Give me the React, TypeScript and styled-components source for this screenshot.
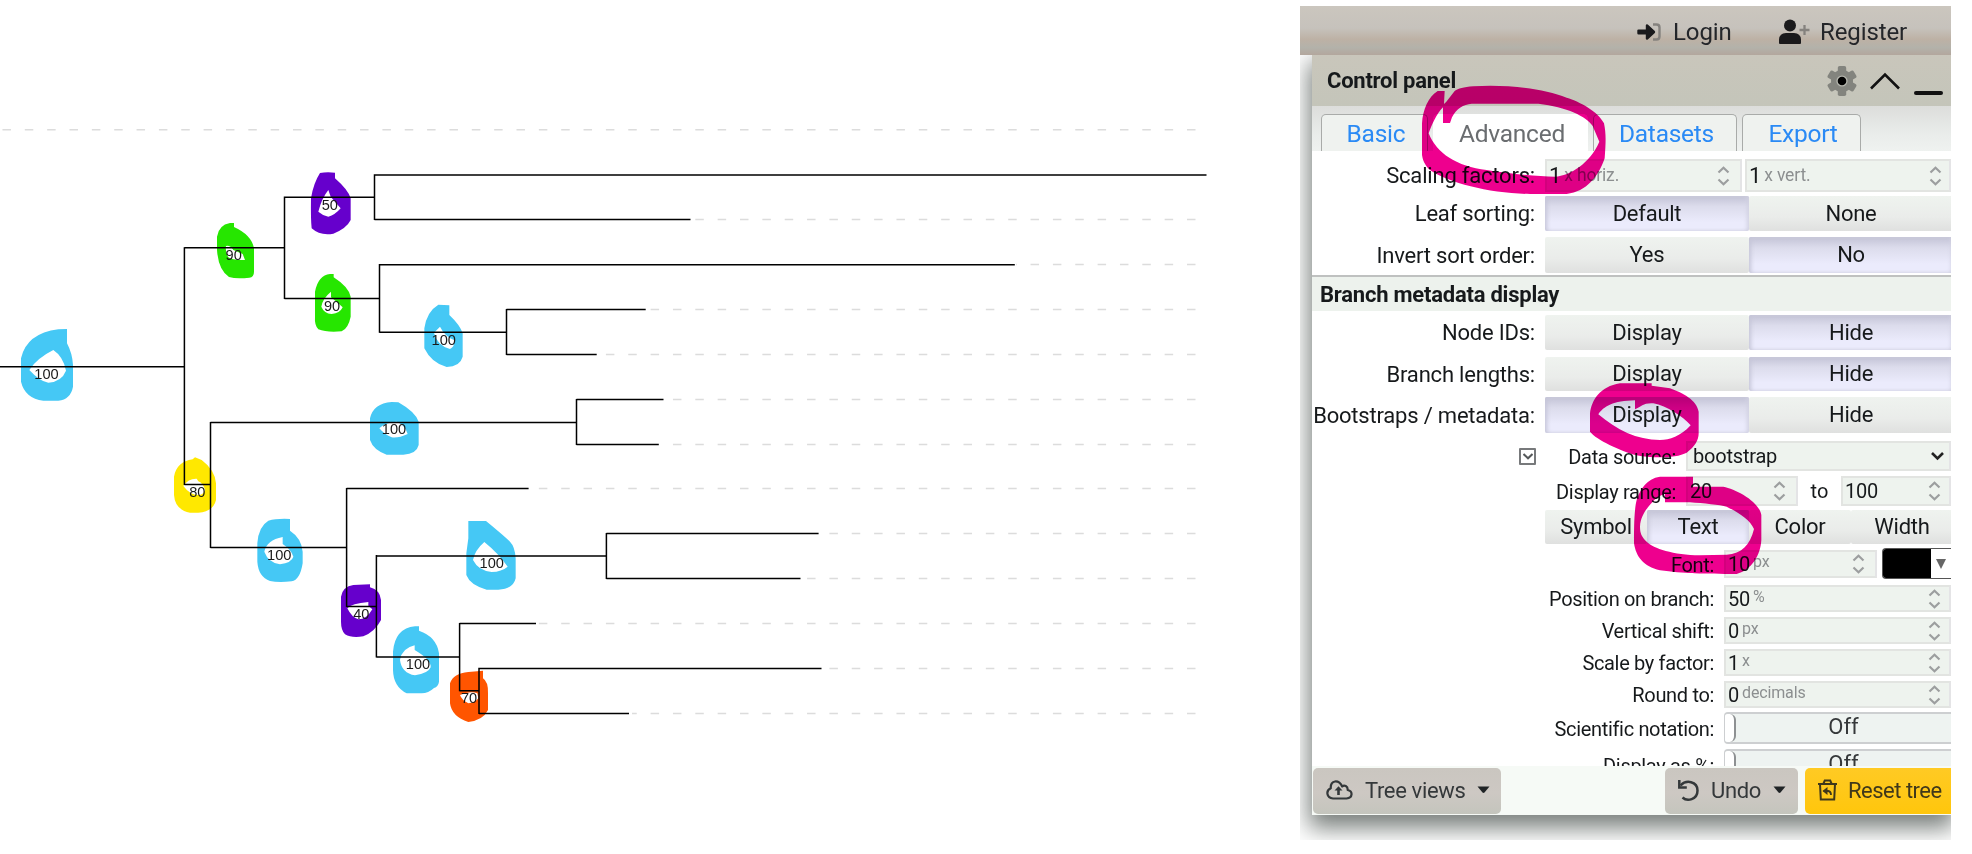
import React from "react";
import styled, { createGlobalStyle, css } from "styled-components";

const Global = createGlobalStyle`
  * { box-sizing: border-box; }
  html, body { margin: 0; padding: 0; background: #fff; }
  body { overflow: hidden; font-family: Roboto, "Liberation Sans", sans-serif; color: #16191b; }
`;

/* ---------- page ---------- */

const Page = styled.main`
  position: relative;
  display: flex;
  width: 1972px;
  height: 854px;
  overflow: hidden;
`;

const TreeView = styled.svg`
  flex: 0 0 1300px;
  height: 854px;
  display: block;
`;

const TreeLabel = styled.text`
  font: 14.6px "Liberation Sans", sans-serif;
  fill: #1a1a1a;
  text-anchor: middle;
`;

const Side = styled.aside`
  width: 651px;
  height: 834px;
  margin-top: 6px;
  overflow: hidden;
  display: flex;
  flex-direction: column;
`;

const TopBar = styled.header`
  flex: 0 0 49px;
  display: flex;
  align-items: center;
  justify-content: flex-end;
  padding: 2px 44px 0 0;
  gap: 48px;
  background: linear-gradient(#cbc6be 0%, #c6c2bc 45%, #bdb1a5 68%, #b3b2aa 85%, #b3a79d 100%);
  position: relative;
  z-index: 1;
`;

const TopLink = styled.a<{ $w: number; $gap: number }>`
  display: flex;
  align-items: center;
  gap: ${(p) => p.$gap}px;
  font-size: 24px;
  letter-spacing: -0.1px;
  color: #24262a;
  span { width: ${(p) => p.$w}px; white-space: nowrap; }
`;

const Panel = styled.section`
  margin-left: 12px;
  height: 760px;
  display: flex;
  flex-direction: column;
  background: #fff;
  box-shadow: 0 10px 22px 3px rgba(30, 40, 35, 0.6);
`;

const PanelHead = styled.div`
  flex: 0 0 51px;
  display: flex;
  align-items: center;
  justify-content: space-between;
  padding: 0 7px 0 15px;
  background: linear-gradient(#c9c6bb, #c4c5ba);
`;

const PanelTitle = styled.h2`
  margin: 0;
  font-size: 22px;
  font-weight: 700;
  letter-spacing: -0.25px;
`;

const HeadTools = styled.div`
  display: flex;
  align-items: center;
  gap: 11.5px;
`;

const Tabs = styled.nav`
  flex: 0 0 45px;
  display: flex;
  align-items: flex-end;
  gap: 5px;
  padding-left: 9px;
  background: linear-gradient(#dcdddb, #e9ecea 60%, #eff2f0);
`;

const Tab = styled.button<{ $w: number; $active?: boolean }>`
  width: ${(p) => p.$w}px;
  height: 37px;
  padding: 0 0 0 3px;
  font: 24.5px Roboto, sans-serif;
  letter-spacing: -0.25px;
  color: ${(p) => (p.$active ? "#6a6d70" : "#2a8af5")};
  background: ${(p) => (p.$active ? "#fff" : "#eff2ef")};
  border: 1px solid #a9aba9;
  border-bottom: 0;
  border-radius: 5px 5px 0 0;
  ${(p) => p.$active && css`border-color: #fff;`}
`;

const Body = styled.div`
  flex: 0 0 615px;
  overflow: hidden;
  display: flex;
  flex-direction: column;
`;

const Row = styled.div<{ $mt: number; $h: number }>`
  flex: 0 0 ${(p) => p.$h}px;
  height: ${(p) => p.$h}px;
  min-height: 0;
  margin-top: ${(p) => p.$mt}px;
  display: flex;
  align-items: stretch;
`;

const Label = styled.label<{ $w: number; $small?: boolean }>`
  flex: 0 0 ${(p) => p.$w}px;
  display: flex;
  align-items: center;
  justify-content: flex-end;
  padding: 1px 10px 0 0;
  white-space: nowrap;
  line-height: 1;
  font-size: ${(p) => (p.$small ? 20 : 22)}px;
  letter-spacing: ${(p) => (p.$small ? -0.33 : -0.2)}px;
`;

const SectionTitle = styled.h3`
  flex: 0 0 36px;
  margin: 2px 0 0;
  padding: 1px 0 0 8px;
  display: flex;
  align-items: center;
  font-size: 22px;
  font-weight: 700;
  letter-spacing: -0.23px;
  background: #edf2ed;
  border-top: 2px solid #bfc1c0;
`;

const Choice = styled.button<{ $on?: boolean; $w?: number }>`
  flex: 0 0 ${(p) => p.$w ?? 204}px;
  border: 0;
  border-radius: 2px;
  padding: 0 0 1px;
  font: 22px Roboto, sans-serif;
  letter-spacing: -0.25px;
  color: #16191b;
  background: linear-gradient(#eff3ef, #eaecea 60%, #dfe0df);
  ${(p) =>
    p.$on &&
    css`
      background: linear-gradient(#c3c3d6, #dcdcec 30%, #ebebfc 75%);
      box-shadow: inset 3px 0 4px -1px #c6c6d8, inset -3px 0 4px -1px #d2d2e2;
    `}
`;

const Field = styled.div<{ $w: number; $ml?: number; $small?: boolean; $inset?: number; $pl?: number }>`
  flex: 0 0 ${(p) => p.$w}px;
  margin-left: ${(p) => p.$ml ?? 0}px;
  display: flex;
  align-items: center;
  gap: 3px;
  padding: 0 ${(p) => p.$inset ?? 10}px 0 ${(p) => p.$pl ?? 2}px;
  line-height: 1;
  font-size: ${(p) => (p.$small ? 20 : 22)}px;
  letter-spacing: -0.2px;
  background: #eef3ee;
  border: 2px solid #e2e4e1;
  border-right-color: #e4e4e6;
  svg { margin-left: auto; }
`;

const Unit = styled.span<{ $raised?: boolean }>`
  font-size: ${(p) => (p.$raised ? 16 : 17.5)}px;
  letter-spacing: -0.15px;
  color: #8c8f90;
  ${(p) => p.$raised && css`padding-bottom: 4px;`}
`;

const Between = styled.span`
  flex: 0 0 43px;
  display: flex;
  align-items: center;
  justify-content: center;
  font-size: 20px;
`;

const Swatch = styled.div`
  flex: 1;
  margin: -2px 0 -1px 5px;
  display: flex;
  border: 1px solid #555;
  border-right: 0;
  border-radius: 4px 0 0 4px;
  background: #fff;
  overflow: hidden;
`;

const SwatchColor = styled.i`
  width: 48px;
  background: #000;
`;

const SwatchArrow = styled.span`
  flex: 1;
  display: flex;
  align-items: center;
  justify-content: center;
`;

const Toggle = styled.div`
  flex: 1;
  display: flex;
  background: #eef3f1;
  border: solid #cdcfd1;
  border-width: 2px 0 2px 1px;
  border-radius: 4px 0 0 4px;
`;

const Knob = styled.i`
  width: 11px;
  background: #fff;
  border-right: 2px solid #8d9092;
  border-radius: 3px 6px 6px 3px;
`;

const ToggleText = styled.span`
  flex: 1;
  text-align: center;
  font-size: 22px;
  line-height: 26px;
  color: #35383a;
`;

const Footer = styled.footer`
  flex: 0 0 49px;
  display: flex;
  align-items: center;
  padding: 2px 0 1px 1px;
  background: #f6faf6;
`;

const FootButton = styled.button<{ $w: number; $gap: number; $primary?: boolean }>`
  width: ${(p) => p.$w}px;
  height: 46px;
  display: flex;
  align-items: center;
  gap: ${(p) => p.$gap}px;
  padding: 0 0 2px 13px;
  border: 0;
  border-radius: 5px;
  font: 22px Roboto, sans-serif;
  letter-spacing: -0.35px;
  white-space: nowrap;
  color: #34383a;
  background: linear-gradient(#cac6c0, #cdc8c3 55%, #c4c5bd);
  ${(p) =>
    p.$primary &&
    css`
      border-radius: 5px 0 0 5px;
      letter-spacing: -0.5px;
      color: #40381a;
      background: linear-gradient(#ffca24, #ffc60c);
    `}
`;

const Spacer = styled.span<{ $w: number }>`
  flex: 0 0 ${(p) => p.$w}px;
`;

const CheckBox = styled.span`
  flex: 0 0 17px;
  align-self: center;
  height: 17px;
  margin-left: 207px;
  border: 2px solid #77797b;
  border-radius: 1px;
  display: flex;
  align-items: center;
  justify-content: center;
`;

const Marker = styled.svg`
  position: absolute;
  inset: 0;
  pointer-events: none;
  mix-blend-mode: multiply;
`;

/* ---------- icons ---------- */

const Spin = () => (
  <svg width="13" height="20" viewBox="0 0 13 20" fill="none" stroke="#9c9e9f" strokeWidth="2.2">
    <path d="M1.5 6.5 6.5 1.8l5 4.7M1.5 13.5l5 4.7 5-4.7" />
  </svg>
);

const Caret = () => (
  <svg width="13" height="8" viewBox="0 0 12 8">
    <path d="M0 .5h12L7 6.6q-1 .9-2 0z" fill="#202426" />
  </svg>
);

const LoginIcon = () => (
  <svg width="25" height="20" viewBox="0 0 25 20">
    <path d="M16 2.5h3.5q3 0 3 3v9q0 3-3 3H16" fill="none" stroke="#85827e" strokeWidth="2.4" />
    <path d="M1.5 7.4h7.3V3.2q.6-1.7 2-.6l7 6.4q.9 1 0 2l-7 6.4q-1.4 1-2-.6v-4.2H1.5Q.3 12.4.3 11.2V8.6q0-1.2 1.2-1.2z" fill="#1a1a1c" />
  </svg>
);

const RegisterIcon = () => (
  <svg width="31" height="25" viewBox="0 0 31 25">
    <circle cx="11" cy="6.4" r="6" fill="#1a1a1c" />
    <path d="M0 24v-3.5q.5-6.500 7-6.500h8q6.500 0 7 6.500V24q0 1-1 1H1q-1 0-1-1z" fill="#1a1a1c" />
    <path d="M25.5 6v10M20.5 11h10" stroke="#85827e" strokeWidth="2.3" />
  </svg>
);

const GearIcon = () => (
  <svg width="30" height="32" viewBox="-15 -16 30 32">
    <g fill="#83847e">
      <circle r="11" />
      {[0, 60, 120].map((a) => (
        <rect key={a} x="-4.2" y="-15" width="8.4" height="30" rx="1.8" transform={`rotate(${a})`} />
      ))}
    </g>
    <circle r="5.6" fill="#b5b6ae" />
    <circle r="4.3" fill="#000" />
  </svg>
);

const CloudIcon = () => (
  <svg width="27" height="20" viewBox="0 0 27 20" fill="none" stroke="#34383a" strokeWidth="2.2">
    <path d="M7 18.5h13.500c6.500-.5 6.500-7.500 1.200-8.500.2-4-3.500-5.300-5.500-3.500C13-.5 4-.5 4.800 8.300-.5 10.500.5 18 7 18.500z" strokeLinejoin="round" />
    <path d="M12.500 15V8" strokeWidth="2.600" />
    <path d="M8.500 10.500 12.500 6.300l4 4.200z" fill="#34383a" stroke="none" />
  </svg>
);

const UndoIcon = () => (
  <svg width="21" height="21" viewBox="0 0 21 21" fill="none" stroke="#34383a" strokeWidth="2.5">
    <path d="M2.500 5.500C8-.5 19.500 1 19.500 10.500S9 21.500 4.500 17.500" />
    <path d="M1.300 0v7.500h7.500" />
  </svg>
);

const TrashIcon = () => (
  <svg width="19" height="22" viewBox="0 0 19 22" fill="none" stroke="#40381a" strokeWidth="2">
    <path d="M0 5h19M5.500 4.500l1.300-3h5.400l1.300 3M2 5l.8 15.500h13.400L17 5" />
    <path d="M5.500 12h4.800q2.700.3 2.700 4" strokeWidth="1.800" />
    <path d="M9.500 8v8L4.500 12z" fill="#40381a" stroke="none" />
  </svg>
);

/* ---------- tree data ---------- */

const leaders: [number, number][] = [
  [0, 129.8], [690, 219.6], [1016, 264.6], [648, 309.5], [599, 354.5], [668, 399.5], [662, 444.5],
  [532, 488.6], [822, 533.5], [803, 578.5], [538, 623.5], [825, 668.5], [632, 713.5],
];

const branches = [
  "M0 366.8H184.4M184.4 247.2V484.9",
  "M184.4 247.8H284.5M284.5 196.5V299",
  "M284.5 197.2H374.5M374.5 174.2V220.1M374.5 174.9H1206.5M374.5 219.6H690.5",
  "M284.5 298.5H379.5M379.5 264.1V332.7M379.5 264.7H1014.8",
  "M379.5 332.2H506.5M506.5 309V355.1M506.5 309.6H645.7M506.5 354.6H596.7",
  "M184.4 484.4H210.5M210.5 421.9V547.9",
  "M210.5 422.4H576.5M576.5 398.9V445.1M576.5 399.5H663.5M576.5 444.5H658.8",
  "M210.5 547.4H346.6M346.6 488V606.9M346.6 488.5H528.6",
  "M346.6 606.4H376.4M376.4 555V657.6",
  "M376.4 555.9H606.4M606.4 533V579M606.4 533.6H818.6M606.4 578.5H800.5",
  "M376.4 657.1H459.6M459.6 623V691.2M459.6 623.5H536",
  "M459.6 690.7H479M479 667.8V714M479 668.4H821.5M479 713.5H629",
];

const labels: [number, number, string][] = [
  [46.5, 379, "100"], [329.8, 210.3, "50"], [233.7, 260, "90"], [332, 311, "90"],
  [443.7, 345.3, "100"], [394, 434.3, "100"], [197.3, 497, "80"], [279.3, 560, "100"],
  [491.7, 568.3, "100"], [361.3, 619, "40"], [418, 669.3, "100"], [469, 703.3, "70"],
];

const SKY = "#45c8f5";
const GREEN = "#26e600";
const VIOLET = "#6600cc";

/* Highlighter blobs grouped by local origin, drawn at triple resolution. */
const blobs: { at: [number, number]; color: string; d: string }[] = [
  { at: [0, 120], color: SKY, d: "M201 627V670Q217 700 219 735V800Q212 838 175 842H130Q75 835 63 785V715Q80 640 175 628ZM160 690Q110 715 88 750Q120 785 145 788Q185 785 198 752Q190 710 160 690Z" },
  { at: [0, 120], color: GREEN, d: "M702 309V321Q755 345 762 385V455Q762 472 748 473Q710 478 687 471Q655 450 651 390V350Q656 315 690 309ZM678 378Q675 395 685 412Q700 422 735 420L728 402 700 390Q690 375 678 378Z" },
  { at: [0, 120], color: VIOLET, d: "M1005 158V175Q1045 210 1052 235V300Q1040 325 1000 341Q960 348 935 325Q932 300 933 235Q940 190 960 159Q980 155 1005 158ZM985 210Q965 235 955 275Q970 288 985 290Q1005 285 1022 265Q1005 245 992 230Z" },
  { at: [0, 120], color: GREEN, d: "M1001 462V472Q1045 500 1052 530V590Q1045 625 1025 634Q980 638 955 628Q943 615 945 590V515Q955 465 990 462ZM993 515Q968 535 964 560Q972 580 995 582Q1020 580 1028 562Q1010 545 993 532Z" },
  { at: [270, 160], color: SKY, d: "M538 436V465Q570 495 578 520V590Q570 620 530 621Q485 610 463 565V505Q470 455 505 434ZM510 500 L492 518Q500 555 540 567Q555 560 552 540Q525 530 510 500Z" },
  { at: [270, 160], color: SKY, d: "M385 727Q435 755 446 785V855Q440 882 400 884H350Q310 870 300 840V775Q310 730 365 726ZM328 805Q350 785 380 785Q405 795 413 822Q385 835 365 832Q345 825 328 805Z" },
  { at: [160, 380], color: "#ffe800", d: "M105 232L125 240Q165 270 168 310V360Q160 395 115 398H90Q45 390 42 345V290Q50 245 98 238ZM70 318Q85 295 110 296L115 304Q130 310 135 330Q130 345 115 345Q90 345 70 318Z" },
  { at: [160, 380], color: SKY, d: "M390 417V452Q425 475 428 515V550Q420 600 395 604Q355 608 330 603Q295 590 292 545V490Q295 440 325 422Q350 415 390 417ZM368 471V492Q395 510 400 530Q395 548 360 553Q325 548 313 515Q320 480 368 471Z" },
  { at: [160, 380], color: SKY, d: "M925 423H978Q1035 470 1050 485Q1065 500 1067 535V595Q1060 627 1015 629H980Q930 615 919 585V520L925 475ZM973 486Q945 510 939 540Q955 572 995 576Q1025 575 1043 560Q1015 520 973 486Z" },
  { at: [160, 380], color: VIOLET, d: "M630 613V622Q660 630 663 660V720Q645 755 610 769Q575 775 555 763Q543 750 543 725V650Q548 620 580 615ZM562 685Q575 670 625 666V677L637 688Q620 718 595 718Q575 712 562 685Z" },
  { at: [160, 380], color: SKY, d: "M777 739V752Q830 770 837 820V905Q835 920 822 924Q805 940 785 940H740Q700 920 699 870V815Q705 745 765 739ZM764 796Q725 805 720 840Q725 880 765 886Q805 880 812 862Q815 840 764 810Z" },
  { at: [160, 380], color: "#ff5500", d: "M969 872V895Q985 905 984 940V990Q970 1020 925 1026Q875 1010 870 970V910Q880 880 925 876ZM900 945Q905 960 925 970Q945 968 955 955L952 940Q930 932 900 945Z" },
];

const rings: { at: [number, number]; d: string }[] = [
  { at: [1290, 0], d: "M464 273H443C415 290 398 330 396 370V465C400 490 410 500 420 510C480 550 600 580 720 582H830C890 575 925 530 944 475C948 420 948 400 942 370C925 335 870 305 830 293C760 265 650 253 550 259C520 261 505 266 494 273L469 305L462 312ZM416 400C425 375 440 340 459 322V369H480L486 352C500 325 520 313 545 311H745C830 320 890 350 908 378L928 425C900 490 840 527 795 530C740 530 650 520 590 510C500 500 440 460 416 400Z" },
  { at: [1570, 370], d: "M245 40H150C90 50 65 90 60 130V185C80 210 150 242 200 256C250 266 320 264 350 248C375 230 386 210 386 190V125C380 90 340 70 300 55L245 47ZM85 133C100 110 130 92 195 91V118C215 110 220 98 250 100C290 108 340 140 362 166C330 200 300 210 270 210C200 210 140 180 85 133Z" },
  { at: [1570, 370], d: "M369 320H270C230 325 210 360 200 390C192 420 192 480 192 520C198 560 220 590 270 601C340 611 400 612 500 612C545 600 572 555 574 510V435C568 395 500 358 460 350H369ZM210 470C212 430 240 405 253 390Q270 375 285 372V397H360C400 400 450 405 470 410C510 430 540 450 552 477C540 525 515 552 470 554L390 556C310 555 250 535 230 515C215 500 210 490 210 470Z" },
];

/* ---------- panel pieces ---------- */

const ChoiceRow = ({ label, options, on, mt, h }: {
  label: string; options: [string, string]; on: 0 | 1; mt: number; h: number;
}) => (
  <Row $mt={mt} $h={h}>
    <Label $w={233}>{label}</Label>
    {options.map((o, i) => (
      <Choice key={o} $on={i === on}>{o}</Choice>
    ))}
  </Row>
);

const NumberRow = ({ label, value, unit, mt = 5 }: { label: string; value: string; unit: string; mt?: number }) => (
  <Row $mt={mt} $h={27}>
    <Label $w={412} $small>{label}</Label>
    <Field $w={227} $small $inset={8}>
      {value}
      <Unit $raised>{unit}</Unit>
      <Spin />
    </Field>
  </Row>
);

const ToggleRow = ({ label, mt }: { label: string; mt: number }) => (
  <Row $mt={mt} $h={32}>
    <Label $w={412} $small>{label}</Label>
    <Toggle>
      <Knob />
      <ToggleText>Off</ToggleText>
    </Toggle>
  </Row>
);

export default function App() {
  return (
    <>
      <Global />
      <Page>
        <TreeView viewBox="0 0 1300 854">
          <g stroke="#dcdcdc" strokeWidth="1.5" strokeDasharray="8.5 13.85">
            {leaders.map(([x, y]) => (
              <line key={y} x1="1195.5" y1={y} x2={x} y2={y} />
            ))}
          </g>
          {blobs.map((b, i) => (
            <path key={i} d={b.d} fill={b.color} fillRule="evenodd" transform={`translate(${b.at[0]} ${b.at[1]}) scale(${1 / 3})`} />
          ))}
          <path d={branches.join("")} fill="none" stroke="#000" strokeWidth="1.5" />
          {labels.map(([x, y, t]) => (
            <TreeLabel key={`${x}`} x={x} y={y}>{t}</TreeLabel>
          ))}
        </TreeView>

        <Side>
          <TopBar>
            <TopLink $w={58} $gap={11}><LoginIcon /><span>Login</span></TopLink>
            <TopLink $w={87} $gap={10}><RegisterIcon /><span>Register</span></TopLink>
          </TopBar>
          <Panel>
            <PanelHead>
              <PanelTitle>Control panel</PanelTitle>
              <HeadTools>
                <GearIcon />
                <svg width="32" height="20" viewBox="0 0 32 20" fill="none" stroke="#111" strokeWidth="2.6">
                  <path d="M2 17.5 16 3.500l14 14" />
                </svg>
                <svg width="32" height="30" viewBox="0 0 32 30" stroke="#111" strokeWidth="4" strokeLinecap="round">
                  <path d="M4 27h25" />
                </svg>
              </HeadTools>
            </PanelHead>
            <Tabs>
              <Tab $w={107}>Basic</Tab>
              <Tab $w={155} $active>Advanced</Tab>
              <Tab $w={144}>Datasets</Tab>
              <Tab $w={119}>Export</Tab>
            </Tabs>
            <Body>
              <Row $mt={8} $h={33}>
                <Label $w={233}>Scaling factors:</Label>
                <Field $w={197}>1<Unit>x horiz.</Unit><Spin /></Field>
                <Field $w={206} $ml={3} $inset={7}>1<Unit>x vert.</Unit><Spin /></Field>
              </Row>
              <ChoiceRow label="Leaf sorting:" options={["Default", "None"]} on={0} mt={4} h={35} />
              <ChoiceRow label="Invert sort order:" options={["Yes", "No"]} on={1} mt={6} h={36} />
              <SectionTitle>Branch metadata display</SectionTitle>
              <ChoiceRow label="Node IDs:" options={["Display", "Hide"]} on={1} mt={4} h={35} />
              <ChoiceRow label="Branch lengths:" options={["Display", "Hide"]} on={1} mt={7} h={34} />
              <ChoiceRow label="Bootstraps / metadata:" options={["Display", "Hide"]} on={0} mt={6} h={36} />
              <Row $mt={8} $h={30}>
                <CheckBox>
                  <svg width="10" height="7" viewBox="0 0 10 7" fill="none" stroke="#55585a" strokeWidth="2">
                    <path d="M.5 1 5 5.3 9.5 1" />
                  </svg>
                </CheckBox>
                <Label $w={150} $small>Data source:</Label>
                <Field $w={265} $small $inset={5} $pl={5}>
                  bootstrap
                  <svg width="13" height="10" viewBox="0 0 13 10" fill="none" stroke="#222" strokeWidth="2.6">
                    <path d="M1 2l5.5 5.5L12 2" />
                  </svg>
                </Field>
              </Row>
              <Row $mt={5} $h={30}>
                <Label $w={374} $small>Display range:</Label>
                <Field $w={112} $small>20<Spin /></Field>
                <Between>to</Between>
                <Field $w={110} $small $inset={8}>100<Spin /></Field>
              </Row>
              <Row $mt={4} $h={34}>
                <Spacer $w={233} />
                <Choice $w={102}>Symbol</Choice>
                <Choice $w={102} $on>Text</Choice>
                <Choice $w={102}>Color</Choice>
                <Choice $w={102}>Width</Choice>
              </Row>
              <Row $mt={6} $h={28}>
                <Label $w={412} $small>Font:</Label>
                <Field $w={153} $small>10<Unit $raised>px</Unit><Spin /></Field>
                <Swatch>
                  <SwatchColor />
                  <SwatchArrow>
                    <svg width="10" height="10" viewBox="0 0 10 10"><path d="M0 0h10L5 10z" fill="#666" /></svg>
                  </SwatchArrow>
                </Swatch>
              </Row>
              <NumberRow label="Position on branch:" value="50" unit="%" mt={7} />
              <NumberRow label="Vertical shift:" value="0" unit="px" />
              <NumberRow label="Scale by factor:" value="1" unit="x" />
              <NumberRow label="Round to:" value="0" unit="decimals" />
              <ToggleRow label="Scientific notation:" mt={4} />
              <ToggleRow label="Display as %:" mt={5} />
            </Body>
            <Footer>
              <FootButton $w={188} $gap={12}><CloudIcon />Tree views<Caret /></FootButton>
              <Spacer $w={164} />
              <FootButton $w={133} $gap={12}><UndoIcon />Undo<Caret /></FootButton>
              <Spacer $w={7} />
              <FootButton $w={146} $gap={11} $primary><TrashIcon />Reset tree</FootButton>
            </Footer>
          </Panel>
        </Side>

        <Marker width="1972" height="854" viewBox="0 0 1972 854">
          {rings.map((r, i) => (
            <path key={i} d={r.d} fill="#ee008e" fillRule="evenodd" transform={`translate(${r.at[0]} ${r.at[1]}) scale(${1 / 3})`} />
          ))}
        </Marker>
      </Page>
    </>
  );
}
